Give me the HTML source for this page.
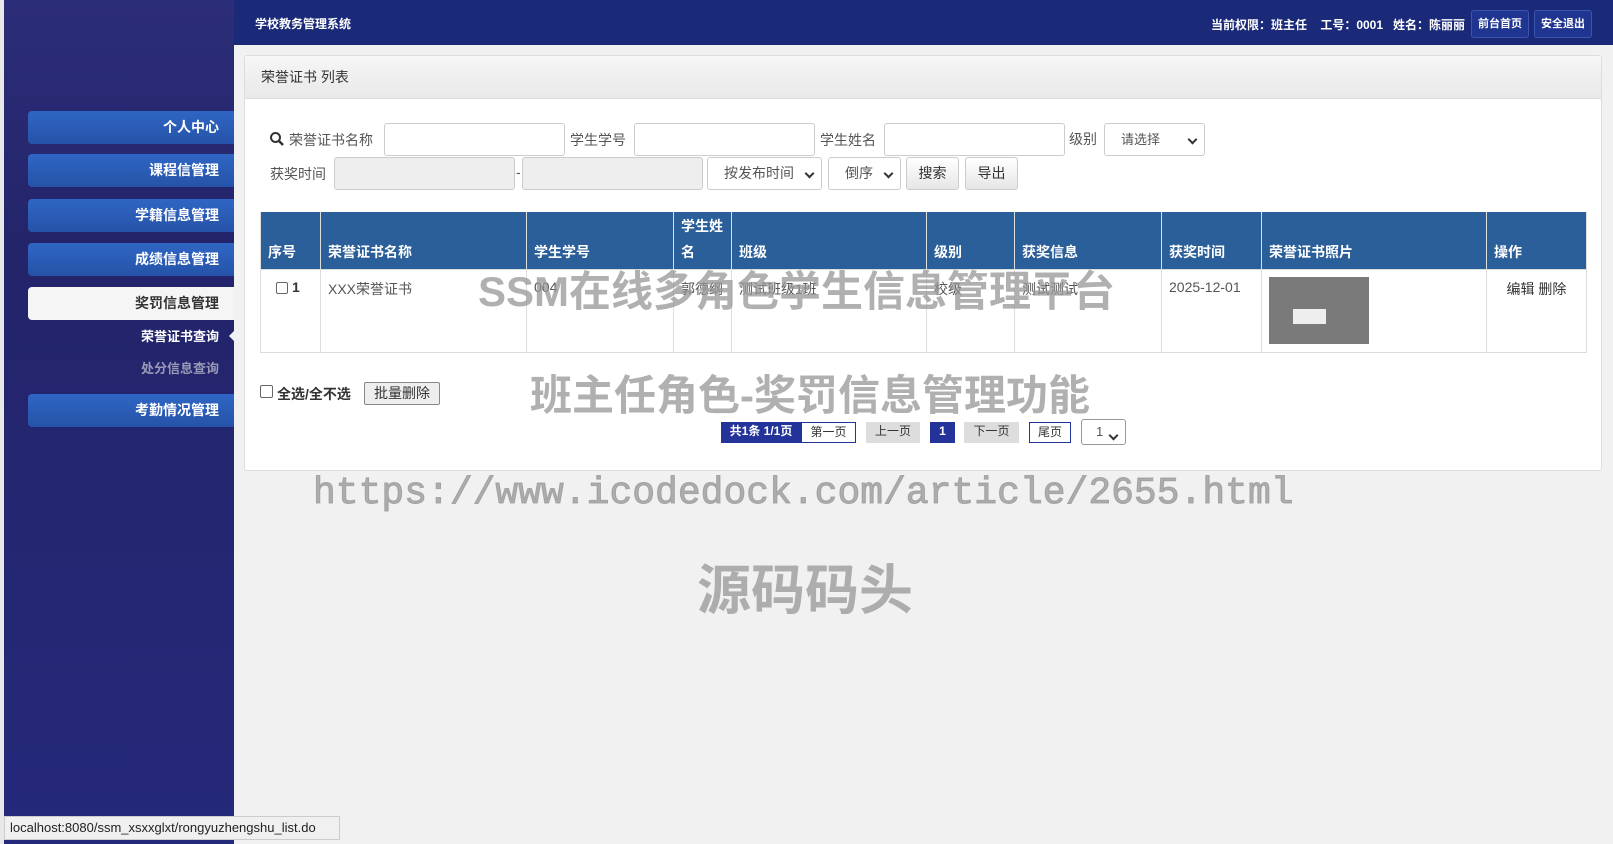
<!DOCTYPE html>
<html><head><meta charset="utf-8"><style>
*{box-sizing:border-box;margin:0;padding:0}
body{width:1613px;height:844px;overflow:hidden;background:#f1f1f1;font-family:"Liberation Sans","Noto Sans CJK SC",sans-serif;position:relative;font-size:14px;color:#333}
.a{position:absolute}
#side{left:4px;top:0;width:230px;height:844px;background:linear-gradient(180deg,#2c2d78 0%,#23246a 30%,#25297a 100%)}
.mi{position:absolute;left:28px;width:206px;height:33px;background:linear-gradient(180deg,#2f66c4,#2553a8);border-radius:4px 0 0 4px;color:#fff;font-weight:bold;font-size:14px;text-align:right;padding-right:15px;line-height:33px}
.mi.on{background:#f5f5f5;color:#333}
.sub{position:absolute;width:160px;text-align:right;font-size:13px;font-weight:bold}
#hd{left:234px;top:0;width:1379px;height:45px;background:#1a2a78}
.hb{position:absolute;top:10px;height:28px;width:58px;background:#1f3590;border:1px solid #3a55b0;border-radius:3px;color:#fff;font-size:11px;font-weight:bold;text-align:center;line-height:26px}
#panel{left:244px;top:55px;width:1358px;height:416px;background:#fff;border:1px solid #ddd;border-radius:3px}
#ph{height:43px;background:linear-gradient(#f6f6f6,#e9e9e9);border-bottom:1px solid #ddd;padding-left:16px;line-height:42px;font-size:14px;color:#333}
.lb{position:absolute;font-size:14px;color:#555}
.in{position:absolute;height:33px;border:1px solid #ccc;border-radius:3px;background:#fff}
.in.g{background:#eee}
.sel{position:absolute;height:33px;border:1px solid #ccc;border-radius:3px;background:#fff;font-size:13px;color:#555;line-height:31px;padding-left:16px}
.sel:after{content:"";position:absolute;right:8px;top:12px;width:5px;height:5px;border-right:2px solid #333;border-bottom:2px solid #333;transform:rotate(45deg)}
.btn{position:absolute;height:33px;border:1px solid #ccc;border-radius:3px;background:linear-gradient(#fff,#e6e6e6);font-size:14px;text-align:center;line-height:31px;color:#333}
table{position:absolute;left:260px;top:212px;width:1327px;border-collapse:collapse}
th{background:#2b5f99;color:#fff;font-weight:bold;text-align:left;vertical-align:bottom;padding:0 7px 4px;height:57px;font-size:14px;border:1px solid #ddd;border-top:none;line-height:26px}
td{border:1px solid #ddd;height:83px;vertical-align:top;padding:9px 7px 6px;font-size:14px;color:#555}
.pg{position:absolute;top:422px;height:21px;font-size:12px;text-align:center;line-height:19px}
.wm{position:absolute;color:rgba(150,150,150,.75);font-weight:bold;white-space:nowrap}
</style></head><body>
<div class="a" style="left:0;top:0;width:4px;height:844px;background:#e8e8e8"></div>
<div id="side" class="a"></div>
<div class="mi" style="top:111px">个人中心</div>
<div class="mi" style="top:154px">课程信管理</div>
<div class="mi" style="top:199px">学籍信息管理</div>
<div class="mi" style="top:243px">成绩信息管理</div>
<div class="mi on" style="top:287px">奖罚信息管理</div>
<div class="sub" style="top:326px;left:59px;color:#fff">荣誉证书查询</div>
<div class="a" style="left:229px;top:330px;width:0;height:0;border-top:6px solid transparent;border-bottom:6px solid transparent;border-right:6px solid #f1f1f1"></div>
<div class="sub" style="top:358px;left:59px;color:#9a9ab8">处分信息查询</div>
<div class="mi" style="top:394px">考勤情况管理</div>

<div id="hd" class="a"></div>
<div class="a" style="left:255px;top:15px;color:#fff;font-size:12px;font-weight:bold">学校教务管理系统</div>
<div class="a" style="left:1211px;top:16px;color:#fff;font-size:12px;font-weight:bold;white-space:nowrap">当前权限：班主任&nbsp;&nbsp;&nbsp;&nbsp;工号：0001&nbsp;&nbsp;&nbsp;姓名：陈丽丽</div>
<div class="hb" style="left:1471px">前台首页</div>
<div class="hb" style="left:1534px">安全退出</div>

<div id="panel" class="a"><div id="ph">荣誉证书 列表</div></div>

<svg class="a" style="left:269px;top:131px" width="16" height="16" viewBox="0 0 16 16"><circle cx="6.5" cy="6.5" r="4.5" fill="none" stroke="#333" stroke-width="2"/><path d="M10 10l4 4" stroke="#333" stroke-width="2.5"/></svg>
<div class="lb" style="left:289px;top:130px">荣誉证书名称</div>
<div class="in" style="left:384px;top:123px;width:181px"></div>
<div class="lb" style="left:570px;top:130px">学生学号</div>
<div class="in" style="left:634px;top:123px;width:181px"></div>
<div class="lb" style="left:820px;top:130px">学生姓名</div>
<div class="in" style="left:884px;top:123px;width:181px"></div>
<div class="lb" style="left:1069px;top:129px">级别</div>
<div class="sel" style="left:1104px;top:123px;width:101px">请选择</div>

<div class="lb" style="left:270px;top:164px">获奖时间</div>
<div class="in g" style="left:334px;top:157px;width:181px"></div>
<div class="lb" style="left:516px;top:164px">-</div>
<div class="in g" style="left:522px;top:157px;width:181px"></div>
<div class="sel" style="left:707px;top:157px;width:115px;padding-left:16px;font-size:14px">按发布时间</div>
<div class="sel" style="left:828px;top:157px;width:73px;font-size:14px">倒序</div>
<div class="btn" style="left:906px;top:157px;width:53px">搜索</div>
<div class="btn" style="left:965px;top:157px;width:53px">导出</div>

<table>
<tr><th style="width:60px">序号</th><th style="width:206px">荣誉证书名称</th><th style="width:147px">学生学号</th><th style="width:58px;line-height:26px">学生姓名</th><th style="width:195px">班级</th><th style="width:88px">级别</th><th style="width:147px">获奖信息</th><th style="width:100px">获奖时间</th><th style="width:225px">荣誉证书照片</th><th>操作</th></tr>
<tr><td style="color:#333;font-weight:bold"><span style="display:inline-block;width:12px;height:12px;border:1px solid #666;border-radius:2px;margin:3px 4px 0 8px;vertical-align:top"></span>1</td><td>XXX荣誉证书</td><td>004</td><td>郭德纲</td><td>测试班级1班</td><td>校级</td><td>测试测试</td><td>2025-12-01</td><td style="padding-top:7px"><div style="width:100px;height:67px;background:#7a7a7a;position:relative"><div style="position:absolute;left:24px;top:32px;width:33px;height:15px;background:#eee"></div></div></td><td style="text-align:center;color:#333">编辑 删除</td></tr>
</table>

<div class="a" style="left:260px;top:385px;width:13px;height:13px;border:1px solid #666;border-radius:2px;background:#fff"></div>
<div class="a" style="left:277px;top:384px;font-size:14px;font-weight:bold;color:#333">全选/全不选</div>
<div class="btn" style="left:364px;top:382px;width:76px;height:23px;line-height:21px;font-size:14px;border-color:#888;background:#eee;border-radius:2px">批量删除</div>

<div class="pg" style="left:721px;width:80px;background:#23339a;color:#fff;font-weight:bold">共1条 1/1页</div>
<div class="pg" style="left:801px;width:55px;border:1px solid #23339a;background:#fff">第一页</div>
<div class="pg" style="left:866px;width:54px;background:#ddd">上一页</div>
<div class="pg" style="left:930px;width:25px;background:#23339a;color:#fff;font-weight:bold">1</div>
<div class="pg" style="left:964px;width:55px;background:#ddd">下一页</div>
<div class="pg" style="left:1029px;width:42px;border:1px solid #23339a;background:#fff">尾页</div>
<div class="sel" style="left:1081px;top:419px;width:45px;height:26px;line-height:24px;padding-left:14px;border-color:#999">1</div>

<div class="wm" style="left:478px;top:258px;font-size:42px">SSM在线多角色学生信息管理平台</div>
<div class="wm" style="left:530px;top:362px;font-size:42px">班主任角色-奖罚信息管理功能</div>
<div class="wm" style="left:313px;top:472px;font-size:38px;font-family:'Liberation Mono',monospace;font-weight:normal;-webkit-text-stroke:1px rgba(150,150,150,.75)">https://www.icodedock.com/article/2655.html</div>
<div class="wm" style="left:697px;top:546px;font-size:54px">源码码头</div>

<div class="a" style="left:4px;top:816px;width:336px;height:24px;background:#f0f0f0;border:1px solid #ccc;font-size:13px;line-height:22px;padding-left:5px;color:#222">localhost:8080/ssm_xsxxglxt/rongyuzhengshu_list.do</div>
</body></html>
